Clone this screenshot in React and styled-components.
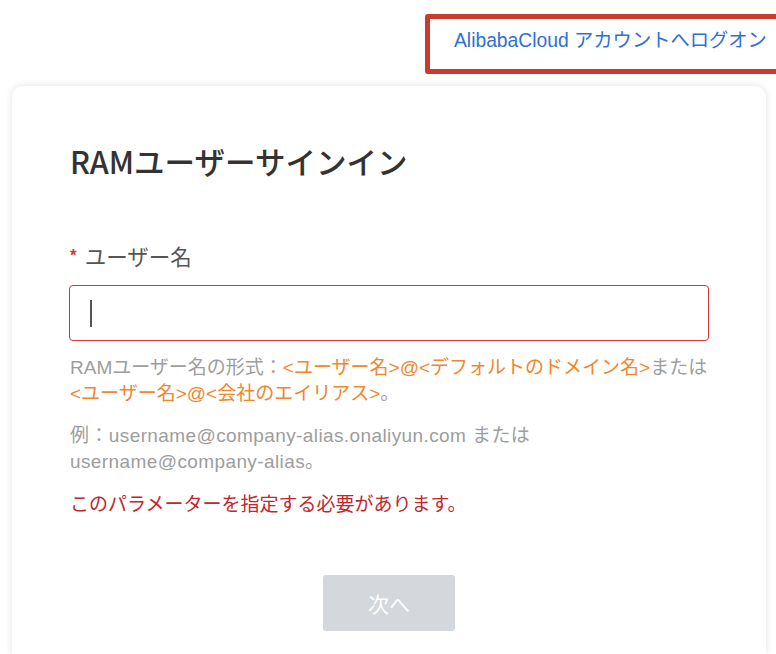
import React from "react";
import styled, { createGlobalStyle } from "styled-components";

const Global = createGlobalStyle`
  html, body { margin: 0; padding: 0; background: #ffffff; }
  body {
    width: 776px;
    height: 654px;
    overflow: hidden;
    font-family: "Liberation Sans", "Noto Sans CJK JP", sans-serif;
  }
`;

const Page = styled.div`
  width: 776px;
  height: 654px;
  overflow: hidden;
  display: flex;
  flex-direction: column;
`;

const Header = styled.header`
  height: 86px;
  display: flex;
  justify-content: flex-end;
  align-items: flex-start;
  padding-top: 14px;
  box-sizing: border-box;
  margin-right: -6px;
`;

const LinkBox = styled.div`
  width: 357px;
  height: 60px;
  box-sizing: border-box;
  border: 5px solid #c93a2f;
  border-radius: 3px;
  display: flex;
  align-items: center;
  padding-left: 24px;
  padding-bottom: 11px;
`;

const HeaderLink = styled.a`
  color: #2f70d4;
  font-size: 19.3px;
  text-decoration: none;
  white-space: nowrap;
`;

const Card = styled.main`
  margin-left: 12px;
  width: 754px;
  flex: 1;
  box-sizing: border-box;
  background: #fff;
  border-radius: 11px 11px 0 0;
  box-shadow: 0 0 7px rgba(0, 0, 0, 0.12);
  padding: 55px 57px 0 57px;
  display: flex;
  flex-direction: column;
`;

const Title = styled.h1`
  margin: 0 0 0 1px;
  font-size: 30.5px;
  line-height: 40px;
  font-weight: 500;
  font-family: "Noto Sans CJK JP", sans-serif;
  color: #333333;
`;

const Label = styled.label`
  margin-top: 62px;
  margin-left: 1px;
  display: flex;
  align-items: center;
  gap: 8px;
  font-size: 21.5px;
  line-height: 30px;
  color: #555555;
`;

const Star = styled.span`
  color: #d33a2c;
  font-size: 17px;
  font-weight: 700;
  margin-top: -4px;
`;

const Input = styled.div`
  margin-top: 12px;
  width: 640px;
  height: 56px;
  box-sizing: border-box;
  border: 1.5px solid #d0382e;
  border-radius: 4px;
  display: flex;
  align-items: center;
  padding-left: 20px;
`;

const Caret = styled.span`
  width: 2px;
  height: 27px;
  background: #555;
`;

const Help = styled.p`
  margin: ${(p) => p.$top}px 0 0 1px;
  font-size: 19px;
  letter-spacing: ${(p) => p.$spacing || 0}px;
  line-height: 26px;
  white-space: nowrap;
  color: ${(p) => p.$color || "#9d9d9d"};
`;

const Accent = styled.span`
  color: #f0862e;
`;

const ButtonRow = styled.div`
  margin-top: 57px;
  display: flex;
  justify-content: center;
`;

const NextButton = styled.button`
  width: 132px;
  height: 56px;
  border: none;
  border-radius: 3px;
  background: #d4d7db;
  color: #ffffff;
  font-family: "Liberation Sans", "Noto Sans CJK JP", sans-serif;
  font-size: 21px;
  cursor: not-allowed;
`;

export default function App() {
  return (
    <>
      <Global />
      <Page>
        <Header>
          <LinkBox>
            <HeaderLink href="#">AlibabaCloud アカウントへログオン</HeaderLink>
          </LinkBox>
        </Header>
        <Card>
          <Title>RAMユーザーサインイン</Title>
          <Label>
            <Star>*</Star>ユーザー名
          </Label>
          <Input>
            <Caret />
          </Input>
          <Help $top={14}>
            RAMユーザー名の形式：<Accent>&lt;ユーザー名&gt;@&lt;デフォルトのドメイン名&gt;</Accent>または
            <br />
            <Accent>&lt;ユーザー名&gt;@&lt;会社のエイリアス&gt;</Accent>。
          </Help>
          <Help $top={16} $spacing={0.4}>
            例：username@company-alias.onaliyun.com または
            <br />
            username@company-alias。
          </Help>
          <Help $top={17} $color="#c3262b">
            このパラメーターを指定する必要があります。
          </Help>
          <ButtonRow>
            <NextButton disabled>次へ</NextButton>
          </ButtonRow>
        </Card>
      </Page>
    </>
  );
}
